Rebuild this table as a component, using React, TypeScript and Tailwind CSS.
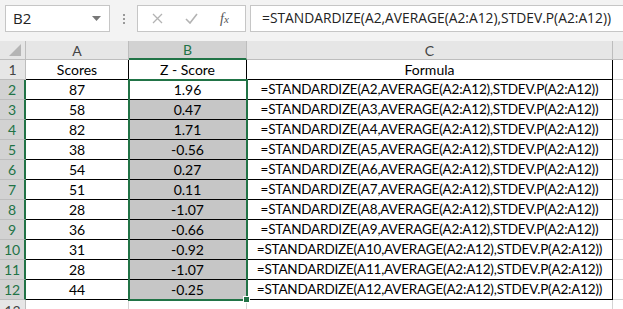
import { Fragment } from "react";

const scores = [87, 58, 82, 38, 54, 51, 28, 36, 31, 28, 44];
const zScores = ["1.96", "0.47", "1.71", "-0.56", "0.27", "0.11", "-1.07", "-0.66", "-0.92", "-1.07", "-0.25"];
const formula = (n: number) => `=STANDARDIZE(A${n},AVERAGE(A2:A12),STDEV.P(A2:A12))`;

const cell = "h-[20px] border-r border-b border-black flex items-center justify-center text-[14px] text-black";

function FormulaBar() {
  return (
    <div className="h-[41px] bg-[#f3f3f3] flex items-start pt-[5px] pl-[5px] font-['Open_Sans',sans-serif]">
      <div className="shrink-0 w-[105px] h-[27px] bg-white border border-[#c6c6c6] flex items-center justify-between pl-[7px] pr-[8px]">
        <span className="text-[15px] text-[#222]">B2</span>
        <svg width="9" height="5" viewBox="0 0 9 5">
          <path d="M0 0h9L4.5 5z" fill="#777" />
        </svg>
      </div>
      <div className="shrink-0 w-[27px] h-[27px] flex flex-col items-center justify-center gap-[2px]">
        <span className="w-[2px] h-[2px] bg-[#999]" />
        <span className="w-[2px] h-[2px] bg-[#999]" />
        <span className="w-[2px] h-[2px] bg-[#999]" />
      </div>
      <div className="shrink-0 w-[109px] h-[27px] bg-white border border-[#c6c6c6] flex items-center">
        <svg className="ml-[14px]" width="11" height="11" viewBox="0 0 11 11">
          <path d="M1 1l9 9M10 1l-9 9" stroke="#b3b3b3" strokeWidth="1.3" />
        </svg>
        <svg className="ml-[22px]" width="13" height="11" viewBox="0 0 13 11">
          <path d="M1 6l4 4 7-9" stroke="#b3b3b3" strokeWidth="1.6" fill="none" />
        </svg>
        <span className="ml-[22px] text-[14px] italic text-[#555] font-['Liberation_Serif',serif]">
          f<span className="text-[11px]">x</span>
        </span>
      </div>
      <div className="ml-[4px] flex-1 min-w-0 overflow-hidden h-[27px] bg-white border border-[#c6c6c6] border-r-0 flex items-center pl-[11px]">
        <span className="text-[13.8px] text-[#222] whitespace-nowrap">{formula(2)}</span>
      </div>
    </div>
  );
}

export default function App() {
  return (
    <div className="w-[623px] h-[309px] overflow-hidden bg-white font-['Lato',sans-serif]">
      <FormulaBar />
      <div className="relative">
        {/* column headers */}
        <div className="flex h-[19px] bg-[#e6e6e6] text-[14px] text-[#444]">
          <div className="shrink-0 w-[26px] border-r border-b border-[#bdbdbd] flex items-end justify-end pr-[4px] pb-[3px]">
            <svg width="12" height="12" viewBox="0 0 12 12">
              <path d="M12 0v12H0z" fill="#b5b5b5" />
            </svg>
          </div>
          <div className="shrink-0 w-[103px] border-r border-b border-[#bdbdbd] flex items-center justify-center">A</div>
          <div className="shrink-0 w-[118px] bg-[#d2d2d2] border-r border-[#bdbdbd] border-b-2 border-b-[#217346] flex items-center justify-center text-[#217346]">B</div>
          <div className="shrink-0 w-[366px] border-r border-b border-[#bdbdbd] flex items-center justify-center">C</div>
          <div className="flex-1 border-b border-[#bdbdbd]" />
        </div>

        {/* rows */}
        <div className="grid grid-cols-[26px_103px_118px_366px_1fr]">
          <div className="h-[20px] bg-[#e6e6e6] border-r border-b border-[#bdbdbd] flex items-center justify-center text-[14px] text-[#444]">1</div>
          <div className={cell}>Scores</div>
          <div className={cell}>Z - Score</div>
          <div className={cell}>Formula</div>
          <div className="h-[20px] border-b border-[#d4d4d4]" />
          {scores.map((s, i) => (
            <Fragment key={i}>
              <div className="h-[20px] bg-[#d2d2d2] border-b border-[#bdbdbd] border-r-2 border-r-[#217346] flex items-center justify-center text-[14px] text-[#217346]">
                {i + 2}
              </div>
              <div className={cell}>{s}</div>
              <div className={`${cell} ${i === 0 ? "bg-white" : "bg-[#c6c6c6]"}`}>{zScores[i]}</div>
              <div className={`${cell} whitespace-nowrap !text-[13.5px] tracking-[-0.2px]`}>{formula(i + 2)}</div>
              <div className="h-[20px] border-b border-[#d4d4d4]" />
            </Fragment>
          ))}
          <div className="h-[20px] bg-[#e6e6e6] border-r border-[#bdbdbd] flex items-center justify-center text-[14px] text-[#444]">13</div>
          <div className="h-[20px] border-r border-[#d4d4d4]" />
          <div className="h-[20px] border-r border-[#d4d4d4]" />
          <div className="h-[20px] border-r border-[#d4d4d4]" />
          <div className="h-[20px]" />
        </div>

        {/* selection outline B2:B12 with fill handle */}
        <div className="absolute left-[128px] top-[38px] w-[120px] h-[222px] border-2 border-[#217346] pointer-events-none">
          <div className="absolute -right-[4px] -bottom-[4px] w-[7px] h-[7px] bg-[#217346] border border-white" />
        </div>
      </div>
    </div>
  );
}
